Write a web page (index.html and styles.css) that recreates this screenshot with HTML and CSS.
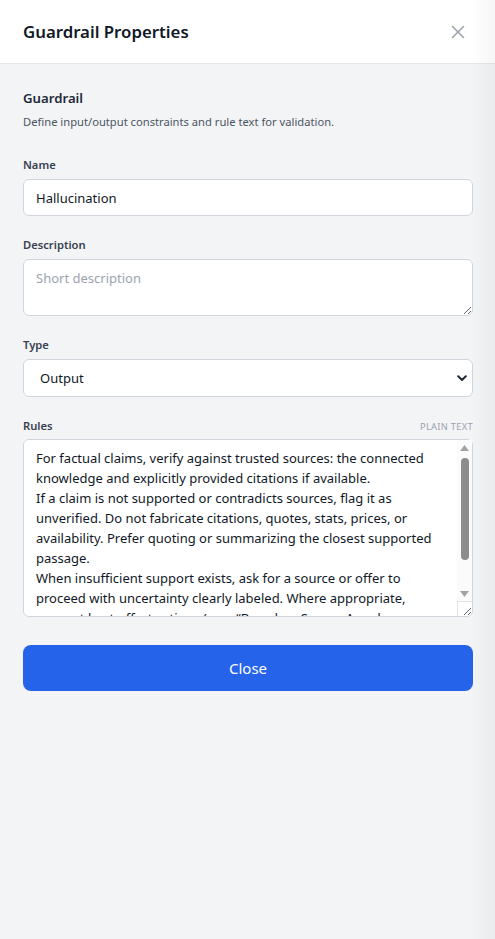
FILE: index.html
```html
<!DOCTYPE html>
<html lang="en">
<head>
<meta charset="utf-8">
<title>Guardrail Properties</title>
<link rel="stylesheet" href="styles.css">
</head>
<body>
<div class="panel">
  <header class="header">
    <h1 class="title">Guardrail Properties</h1>
    <button class="close-x" aria-label="Close">
      <svg width="14" height="14" viewBox="0 0 14 14" fill="none" stroke="currentColor" stroke-width="1.6" stroke-linecap="round"><path d="M1.5 1.5L12.5 12.5M12.5 1.5L1.5 12.5"/></svg>
    </button>
  </header>
  <main class="body">
    <section class="intro">
      <h2 class="section-title">Guardrail</h2>
      <p class="section-desc">Define input/output constraints and rule text for validation.</p>
    </section>
    <div class="field">
      <label class="label">Name</label>
      <input class="input" type="text" value="Hallucination">
    </div>
    <div class="field">
      <label class="label">Description</label>
      <textarea class="input textarea-desc" placeholder="Short description"></textarea>
    </div>
    <div class="field">
      <label class="label">Type</label>
      <div class="select-wrap">
        <select class="input select"><option>Output</option><option>Input</option></select>
        <svg class="chev" width="10" height="7" viewBox="0 0 10 7"><path d="M1.2 1.2L5 5L8.8 1.2" fill="none" stroke="#1f2937" stroke-width="2" stroke-linecap="round" stroke-linejoin="round"/></svg>
      </div>
    </div>
    <div class="field">
      <div class="label-row"><label class="label">Rules</label><span class="hint">PLAIN TEXT</span></div>
      <div class="rules-wrap">
        <textarea class="input textarea-rules">For factual claims, verify against trusted sources: the connected knowledge and explicitly provided citations if available.
If a claim is not supported or contradicts sources, flag it as unverified. Do not fabricate citations, quotes, stats, prices, or availability. Prefer quoting or summarizing the closest supported passage.
When insufficient support exists, ask for a source or offer to proceed with uncertainty clearly labeled. Where appropriate, suggest best-effort actions (e.g., “Based on Source A and Rules/Policy B, the answer is likely…”) and keep claims clearly scoped to the evidence that has been provided.
Never present speculation as fact.</textarea>
        <div class="sb" aria-hidden="true">
          <div class="sb-btn"><svg width="9" height="6" viewBox="0 0 9 6"><path d="M0 6L4.5 0L9 6Z" fill="#a3a3a3"/></svg></div>
          <div class="sb-track"><div class="sb-thumb"></div></div>
          <div class="sb-btn"><svg width="9" height="6" viewBox="0 0 9 6"><path d="M0 0L4.5 6L9 0Z" fill="#a3a3a3"/></svg></div>
        </div>
        <div class="sb-corner" aria-hidden="true"></div>
      </div>
    </div>
    <button class="btn-close">Close</button>
  </main>
  <div class="edge-shade"></div>
</div>
</body>
</html>
```
FILE: styles.css
```css
* { box-sizing: border-box; }
html, body { margin: 0; padding: 0; height: 100%; }
body {
  font-family: "Noto Sans", "Open Sans", "Liberation Sans", sans-serif;
  color: #111827;
  background: #f3f4f6;
}
.panel {
  position: relative;
  min-height: 100%;
  background: #f3f4f6;
}
.header {
  height: 64px;
  background: #fff;
  border-bottom: 1px solid #e5e7eb;
  display: flex;
  align-items: center;
  justify-content: space-between;
  padding: 0 24px 0 23px;
}
.title {
  margin: 0;
  font-size: 16.8px;
  font-weight: 600;
  color: #111827;
}
.close-x {
  border: 0;
  background: none;
  padding: 0;
  margin-right: 6px;
  color: #9ca3af;
  display: flex;
  cursor: pointer;
}
.body {
  padding: 23px 22px 24px 23px;
  display: flex;
  flex-direction: column;
}
.intro { margin-bottom: 26px; }
.section-title {
  margin: 0;
  font-size: 13.2px;
  font-weight: 600;
  color: #1f2937;
  line-height: 22px;
}
.section-desc {
  margin: 4px 0 0;
  font-size: 11.2px;
  color: #4b5563;
  line-height: 18px;
}
.field {
  display: flex;
  flex-direction: column;
  margin-bottom: 21px;
}
.label {
  font-size: 11.2px;
  font-weight: 600;
  color: #374151;
  line-height: 16px;
  margin-bottom: 6px;
}
.label-row {
  display: flex;
  justify-content: space-between;
  align-items: baseline;
  margin-bottom: -1px;
}
.hint {
  font-size: 9.3px;
  color: #9ca3af;
  letter-spacing: 0.3px;
}
.input {
  width: 100%;
  font-family: inherit;
  font-size: 13px;
  color: #111827;
  background: #fff;
  border: 1px solid #d1d5db;
  border-radius: 6px;
  padding: 8px 12px;
  outline: none;
}
input.input { height: 37px; }
.input::placeholder { color: #9ca3af; }
.textarea-desc { height: 57px; resize: vertical; line-height: 20px; }
.select-wrap { position: relative; }
.select {
  height: 38px;
  appearance: none;
  -webkit-appearance: none;
  padding-left: 16px;
}
.chev { position: absolute; right: 6px; top: 16px; pointer-events: none; }
.rules-wrap { position: relative; display: flex; }
.textarea-rules {
  height: 178px;
  line-height: 20px;
  padding: 8px 27px 8px 12px;
  resize: vertical;
  overflow-y: scroll;
  display: block;
}
.sb {
  position: absolute;
  top: 1px;
  right: 1px;
  bottom: 16px;
  width: 15px;
  background: #fbfbfb;
  display: flex;
  flex-direction: column;
  pointer-events: none;
}
.sb-btn {
  height: 15px;
  flex: none;
  display: flex;
  align-items: center;
  justify-content: center;
}
.sb-track { flex: 1; padding: 3px 3.5px; }
.sb-thumb { height: 102px; background: #8c8c8c; border-radius: 4px; }
.sb-corner {
  position: absolute;
  right: 1px;
  bottom: 1px;
  width: 15px;
  height: 15px;
  border-top: 1px solid #e2e2e2;
  border-left: 1px solid #e2e2e2;
  pointer-events: none;
}
.btn-close {
  margin-top: 7px;
  height: 46px;
  border: 0;
  border-radius: 8px;
  background: #2563eb;
  color: #fff;
  font-family: inherit;
  font-size: 15px;
  cursor: pointer;
}
.edge-shade {
  position: absolute;
  top: 0; right: 0; bottom: 0;
  width: 24px;
  background: linear-gradient(to right, rgba(0,0,0,0), rgba(0,0,0,0.035));
  pointer-events: none;
}
```
